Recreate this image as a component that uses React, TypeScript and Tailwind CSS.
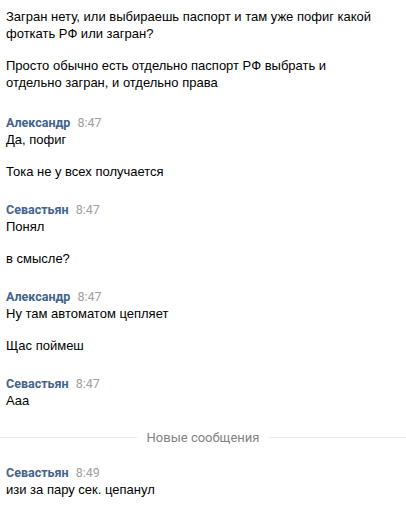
type Group = {
  name: string;
  time: string;
  messages: string[];
};

const groups: Group[] = [
  { name: 'Александр', time: '8:47', messages: ['Да, пофиг', 'Тока не у всех получается'] },
  { name: 'Севастьян', time: '8:47', messages: ['Понял', 'в смысле?'] },
  { name: 'Александр', time: '8:47', messages: ['Ну там автоматом цепляет', 'Щас поймеш'] },
  { name: 'Севастьян', time: '8:47', messages: ['Ааа'] },
];

function MessageGroup({ group }: { group: Group }) {
  return (
    <div className="mt-[21px]">
      <div className="flex items-baseline gap-[7px] leading-[17px]">
        <span className="text-[12.5px] font-bold text-[#42648b] font-['Roboto',sans-serif]">{group.name}</span>
        <span className="text-[12.5px] text-[#a0a0a0] font-['Roboto',sans-serif]">{group.time}</span>
      </div>
      <div className="flex flex-col gap-[15px]">
        {group.messages.map((m, i) => (
          <div key={i} className="leading-[17px]">{m}</div>
        ))}
      </div>
    </div>
  );
}

export default function App() {
  return (
    <div className="w-[406px] h-[512px] overflow-hidden bg-white text-[13px] text-black font-['Liberation_Sans',Arial,sans-serif]">
      <div className="pl-[6px] pr-[24px] pt-[8px]">
        <div className="flex flex-col gap-[15px] leading-[17px]">
          <div>Загран нету, или выбираешь паспорт и там уже пофиг какой фоткать РФ или загран?</div>
          <div>Просто обычно есть отдельно паспорт РФ выбрать и отдельно загран, и отдельно права</div>
        </div>
        <div className="pt-[2px]">
          {groups.map((g, i) => (
            <MessageGroup key={i} group={g} />
          ))}
        </div>
      </div>

      <div className="mt-[20px] flex items-center gap-[10px]">
        <div className="flex-1 h-px bg-[#e7e8ec]" />
        <span className="leading-[17px] text-[#828282] font-['Roboto',sans-serif]">Новые сообщения</span>
        <div className="flex-1 h-px bg-[#e7e8ec]" />
      </div>

      <div className="pl-[6px] mt-[18px]">
        <div className="flex items-baseline gap-[7px] leading-[17px]">
          <span className="text-[12.5px] font-bold text-[#42648b] font-['Roboto',sans-serif]">Севастьян</span>
          <span className="text-[12.5px] text-[#a0a0a0] font-['Roboto',sans-serif]">8:49</span>
        </div>
        <div className="leading-[17px]">изи за пару сек. цепанул</div>
      </div>
    </div>
  );
}
